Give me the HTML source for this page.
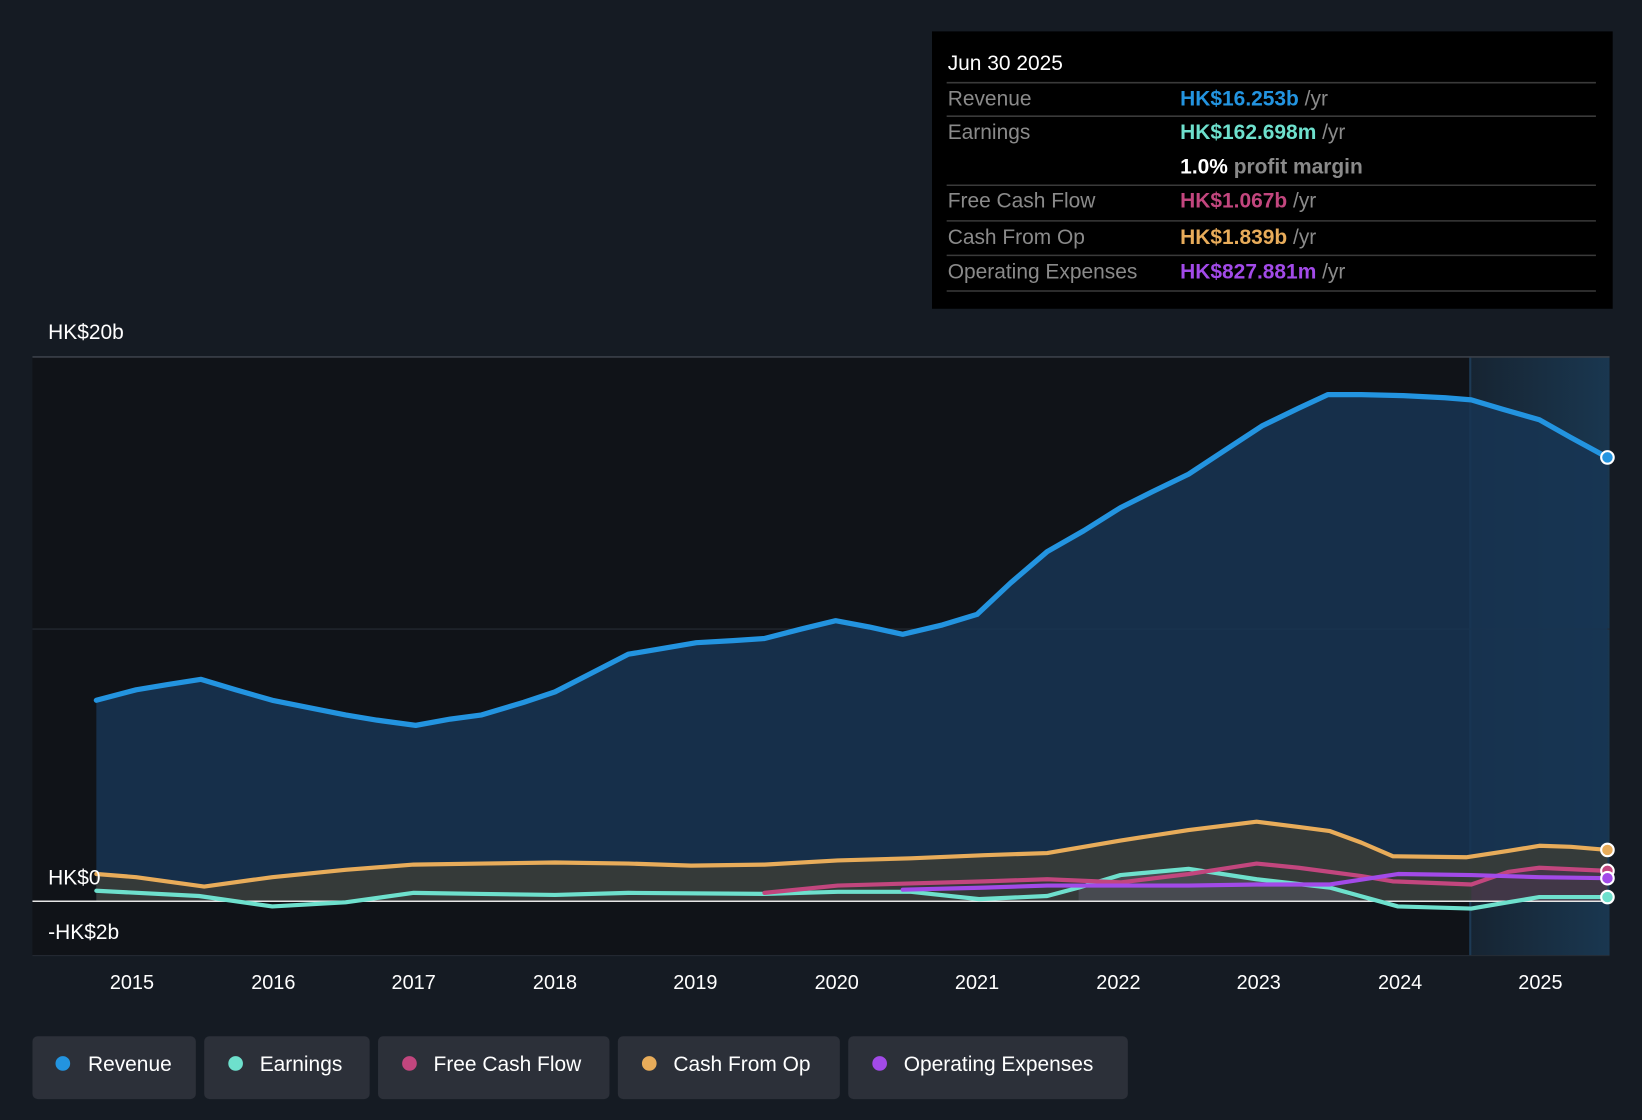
<!DOCTYPE html>
<html><head><meta charset="utf-8"><style>
html,body{margin:0;padding:0;background:#151b23;}
svg{display:block;font-family:"Liberation Sans",sans-serif;}
</style></head><body>
<svg width="1642" height="1120" viewBox="0 0 1568 1070" preserveAspectRatio="none">
<defs>
<linearGradient id="fc" x1="0" x2="1"><stop offset="0" stop-color="#1a3a55" stop-opacity="0.3"/><stop offset="1" stop-color="#1a3a55" stop-opacity="0.9"/></linearGradient>
</defs>
<rect width="1568" height="1070" fill="#151b23"/>
<rect x="31" y="341" width="1373" height="572" fill="#101318"/>
<rect x="1404" y="341" width="133" height="572" fill="url(#fc)"/>
<line x1="1404" y1="341" x2="1404" y2="913" stroke="#1d3a55" stroke-width="2"/>
<line x1="31" y1="341" x2="1537" y2="341" stroke="#3a4049" stroke-width="1.5"/>
<line x1="31" y1="601" x2="1537" y2="601" stroke="#262c35" stroke-width="1"/>
<line x1="31" y1="913" x2="1537" y2="913" stroke="#262c35" stroke-width="1"/>
<polygon fill="#173553" fill-opacity="0.85" points="92,861 92,669 130,659 160,654 192,649 225,659 260,669 300,677 330,683 360,688 397,693 430,687 460,683 500,671 530,661 565,643 600,625 630,620 665,614 700,612 730,610 765,601 798,593 830,599 862,606 900,597 933,587 965,557 1000,527 1035,507 1070,485 1100,470 1135,453 1170,430 1205,407 1240,390 1268,377 1300,377 1340,378 1380,380 1405,382 1435,391 1470,401 1500,418 1535,437 1535,861"/>
<polygon fill="#3d3d35" fill-opacity="0.8" points="92,861 92,835 130,838 195,847 260,838 330,831 395,826 460,825 530,824 600,825 660,827 730,826 800,822 870,820 940,817 1000,815 1070,803 1135,793 1200,785 1240,790 1270,794 1300,805 1330,818 1400,819 1440,813 1470,808 1500,809 1535,812 1535,861"/>
<polygon fill="#5a5a68" fill-opacity="0.5" points="1030,861 1030,848 1070,836 1135,830 1200,840 1270,848 1300,861"/>
<polygon fill="#4a3550" fill-opacity="0.6" points="1405,861 1405,845 1440,833 1470,829 1535,832 1535,861"/>
<line x1="31" y1="861" x2="1537" y2="861" stroke="#e6e6e6" stroke-width="1.5"/>
<g fill="none" stroke-width="4" stroke-linejoin="round" stroke-linecap="round">
<polyline stroke="#2394e0" stroke-width="5" points="92,669 130,659 160,654 192,649 225,659 260,669 300,677 330,683 360,688 397,693 430,687 460,683 500,671 530,661 565,643 600,625 630,620 665,614 700,612 730,610 765,601 798,593 830,599 862,606 900,597 933,587 965,557 1000,527 1035,507 1070,485 1100,470 1135,453 1170,430 1205,407 1240,390 1268,377 1300,377 1340,378 1380,380 1405,382 1435,391 1470,401 1500,418 1535,437"/>
<polyline stroke="#e8ac5a" points="92,835 130,838 195,847 260,838 330,831 395,826 460,825 530,824 600,825 660,827 730,826 800,822 870,820 940,817 1000,815 1070,803 1135,793 1200,785 1240,790 1270,794 1300,805 1330,818 1400,819 1440,813 1470,808 1500,809 1535,812"/>
<polyline stroke="#6ee0cd" points="92,851 190,856 260,866 330,862 395,853 460,854 530,855 600,853 730,854 800,852 870,852 935,859 1000,856 1030,848 1070,836 1135,830 1200,840 1270,848 1335,866 1405,868 1440,862 1470,857 1535,857"/>
<polyline stroke="#c2467e" points="730,853 800,846 870,844 940,842 1000,840 1070,843 1135,835 1200,825 1240,829 1300,837 1330,842 1405,845 1440,833 1470,829 1535,832"/>
<polyline stroke="#a24ae8" points="862,850 940,848 1000,846 1070,846 1135,846 1200,845 1270,845 1335,835 1405,836 1470,838 1535,839"/>
</g>
<g stroke="#fff" stroke-width="2">
<circle cx="1535" cy="437" r="6" fill="#2394e0"/>
<circle cx="1535" cy="812" r="6" fill="#e8ac5a"/>
<circle cx="1535" cy="832" r="6" fill="#c2467e"/>
<circle cx="1535" cy="839" r="6" fill="#a24ae8"/>
<circle cx="1535" cy="857" r="6" fill="#6ee0cd"/>
</g>
<g fill="#fff" font-size="20">
<text x="46" y="324">HK$20b</text>
<text x="46" y="845">HK$0</text>
<text x="46" y="897">-HK$2b</text>
</g>
<g fill="#fff" font-size="19" text-anchor="middle">
<text x="126" y="945">2015</text><text x="261" y="945">2016</text><text x="395" y="945">2017</text><text x="530" y="945">2018</text><text x="664" y="945">2019</text><text x="799" y="945">2020</text><text x="933" y="945">2021</text><text x="1068" y="945">2022</text><text x="1202" y="945">2023</text><text x="1337" y="945">2024</text><text x="1471" y="945">2025</text>
</g>
<rect x="890" y="30" width="650" height="265" fill="#000"/>
<g stroke="#3a3a3a" stroke-width="1.5">
<line x1="904" y1="79" x2="1524" y2="79"/><line x1="904" y1="111" x2="1524" y2="111"/><line x1="904" y1="177" x2="1524" y2="177"/><line x1="904" y1="211" x2="1524" y2="211"/><line x1="904" y1="244" x2="1524" y2="244"/><line x1="904" y1="278" x2="1524" y2="278"/>
</g>
<g font-size="20">
<text x="905" y="67" fill="#fff">Jun 30 2025</text>
<g fill="#8a8a8a"><text x="905" y="101">Revenue</text><text x="905" y="133">Earnings</text><text x="905" y="198">Free Cash Flow</text><text x="905" y="233">Cash From Op</text><text x="905" y="266">Operating Expenses</text></g>
<text x="1127" y="101" fill="#2394e0" font-weight="bold">HK$16.253b <tspan fill="#8a8a8a" font-weight="normal">/yr</tspan></text>
<text x="1127" y="133" fill="#6ee0cd" font-weight="bold">HK$162.698m <tspan fill="#8a8a8a" font-weight="normal">/yr</tspan></text>
<text x="1127" y="166" fill="#fff" font-weight="bold">1.0% <tspan fill="#8a8a8a">profit margin</tspan></text>
<text x="1127" y="198" fill="#c2467e" font-weight="bold">HK$1.067b <tspan fill="#8a8a8a" font-weight="normal">/yr</tspan></text>
<text x="1127" y="233" fill="#e8ac5a" font-weight="bold">HK$1.839b <tspan fill="#8a8a8a" font-weight="normal">/yr</tspan></text>
<text x="1127" y="266" fill="#a24ae8" font-weight="bold">HK$827.881m <tspan fill="#8a8a8a" font-weight="normal">/yr</tspan></text>
</g>
<g fill="#2c3039">
<rect x="31" y="990" width="156" height="60" rx="5"/>
<rect x="195" y="990" width="158" height="60" rx="5"/>
<rect x="361" y="990" width="221" height="60" rx="5"/>
<rect x="590" y="990" width="212" height="60" rx="5"/>
<rect x="810" y="990" width="267" height="60" rx="5"/>
</g>
<circle cx="60" cy="1016" r="7" fill="#2394e0"/>
<circle cx="225" cy="1016" r="7" fill="#6ee0cd"/>
<circle cx="391" cy="1016" r="7" fill="#c2467e"/>
<circle cx="620" cy="1016" r="7" fill="#e8ac5a"/>
<circle cx="840" cy="1016" r="7" fill="#a24ae8"/>
<g fill="#fff" font-size="20">
<text x="84" y="1023">Revenue</text><text x="248" y="1023">Earnings</text><text x="414" y="1023">Free Cash Flow</text><text x="643" y="1023">Cash From Op</text><text x="863" y="1023">Operating Expenses</text>
</g>
</svg>
</body></html>
